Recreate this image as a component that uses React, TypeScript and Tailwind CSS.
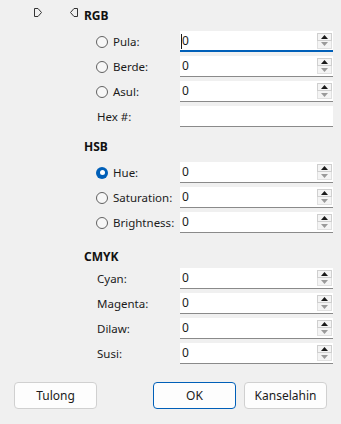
import React from "react";

type Row = { label: string; radio?: boolean; checked?: boolean; focused?: boolean; spinner?: boolean; value?: string };

function Radio(props: { checked?: boolean }) {
  if (props.checked) {
    return (
      <span className="w-[12px] h-[12px] rounded-full bg-[#005fb8] flex items-center justify-center shrink-0">
        <span className="w-[5px] h-[5px] rounded-full bg-white" />
      </span>
    );
  }
  return <span className="w-[12px] h-[12px] rounded-full border border-[#616161] bg-[#f7f7f7] shrink-0" />;
}

function Spinner() {
  return (
    <div className="flex flex-col w-[15px] h-[16px] mr-[1px]">
      <div className="h-[8px] border border-[#cfcfcf] bg-[#f4f4f4] flex items-center justify-center">
        <svg width="7" height="4" viewBox="0 0 7 4">
          <path d="M0 4 L3.5 0 L7 4 Z" fill="#1a1a1a" />
        </svg>
      </div>
      <div className="h-[8px] border border-t-0 border-[#e0e0e0] bg-[#f4f4f4] flex items-center justify-center">
        <svg width="7" height="4" viewBox="0 0 7 4">
          <path d="M0 0 L7 0 L3.5 4 Z" fill="#9a9a9a" />
        </svg>
      </div>
    </div>
  );
}

function Field(props: Row) {
  return (
    <div className="flex items-center h-[21px]">
      <div className="w-[84px] flex items-center gap-[5px]">
        {props.radio && <Radio checked={props.checked} />}
        <span className={props.radio ? "" : "pl-[1px]"}>{props.label}</span>
      </div>
      <div
        className={[
          "relative w-[153px] h-[21px] bg-white flex items-center",
          props.focused ? "border-b-2 border-[#005fb8]" : "border-b border-[#8a8a8a]",
        ].join(" ")}
      >
        {props.focused && <span className="absolute left-[1px] top-[3px] w-[1px] h-[15px] bg-[#1a1a1a]" />}
        <span className="pl-[2px] flex-1 text-[12px] text-[#1b1b1b]">{props.value}</span>
        {props.spinner !== false && <Spinner />}
      </div>
    </div>
  );
}

function Section(props: { title: string; rows: Row[]; top: string; gap: string }) {
  return (
    <div className={props.top}>
      <div className="pl-[84px] h-[16px] leading-[16px] text-[12px] font-bold text-[#111]">{props.title}</div>
      <div className={"pl-[96px] flex flex-col gap-[4px] " + props.gap}>
        {props.rows.map((r) => (
          <Field key={r.label} {...r} />
        ))}
      </div>
    </div>
  );
}

export default function App() {
  return (
    <div className="w-[341px] h-[424px] bg-[#f0f0f0] text-[11.5px] leading-[16px] text-[#1b1b1b] font-['Noto_Sans',sans-serif] flex flex-col">
      <div className="relative pt-[8px]">
        <svg className="absolute left-[34px] top-[8px]" width="8" height="9" viewBox="0 0 8 9">
          <path d="M0.5 0.5 H4 L7.5 4.5 L4 8.5 H0.5 Z" fill="none" stroke="#333" strokeWidth="1" />
        </svg>
        <svg className="absolute left-[70px] top-[8px]" width="8" height="9" viewBox="0 0 8 9">
          <path d="M7.5 0.5 H4 L0.5 4.5 L4 8.5 H7.5 Z" fill="none" stroke="#333" strokeWidth="1" />
        </svg>
        <Section
          title="RGB"
          top=""
          gap="mt-[7px]"
          rows={[
            { label: "Pula:", radio: true, focused: true, value: "0" },
            { label: "Berde:", radio: true, value: "0" },
            { label: "Asul:", radio: true, value: "0" },
            { label: "Hex #:", spinner: false, value: "" },
          ]}
        />
      </div>
      <Section
        title="HSB"
        top="mt-[12px]"
        gap="mt-[7px]"
        rows={[
          { label: "Hue:", radio: true, checked: true, value: "0" },
          { label: "Saturation:", radio: true, value: "0" },
          { label: "Brightness:", radio: true, value: "0" },
        ]}
      />
      <Section
        title="CMYK"
        top="mt-[16px]"
        gap="mt-[3px]"
        rows={[
          { label: "Cyan:", value: "0" },
          { label: "Magenta:", value: "0" },
          { label: "Dilaw:", value: "0" },
          { label: "Susi:", value: "0" },
        ]}
      />
      <div className="mt-auto mb-[15px] flex px-[14px] text-[12px]">
        <button className="w-[83px] h-[27px] rounded-[4px] border border-[#d0d0d0] bg-[#fdfdfd]">Tulong</button>
        <div className="flex-1" />
        <button className="w-[83px] h-[27px] rounded-[4px] border border-[#005fb8] bg-[#fdfdfd]">OK</button>
        <button className="ml-[8px] w-[83px] h-[27px] rounded-[4px] border border-[#d0d0d0] bg-[#fdfdfd]">Kanselahin</button>
      </div>
    </div>
  );
}
